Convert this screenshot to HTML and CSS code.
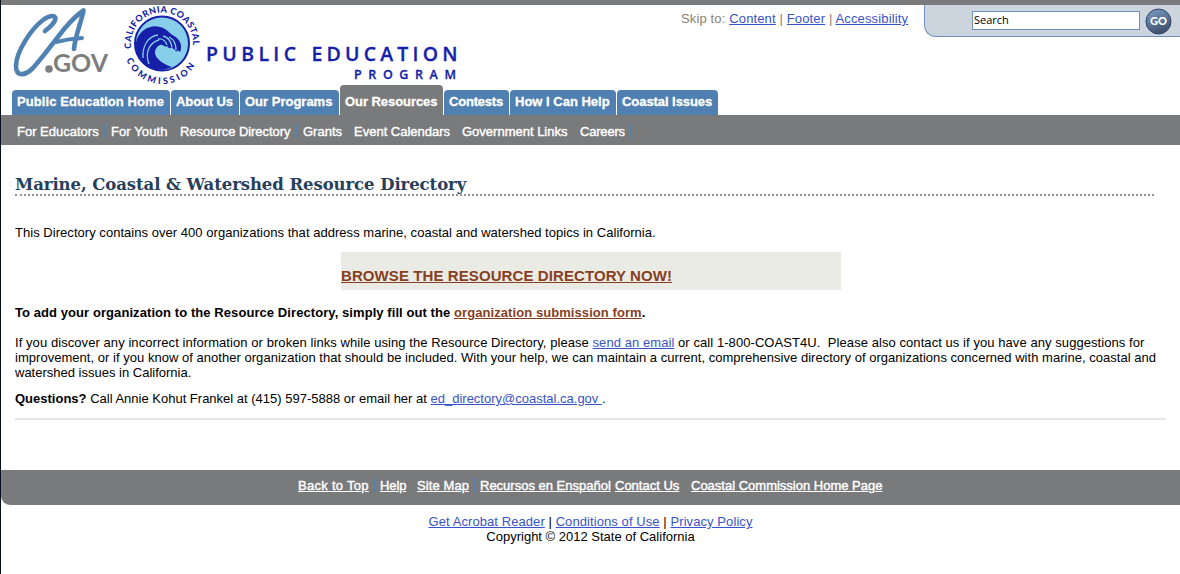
FILE: index.html
```html
<!DOCTYPE html>
<html lang="en">
<head>
<meta charset="utf-8">
<title>Marine, Coastal &amp; Watershed Resource Directory</title>
<link rel="stylesheet" href="styles.css">
</head>
<body>
<div class="page">
  <header class="header">
    <svg class="logo" width="470" height="80" viewBox="0 5 470 80">
      <g fill="none" stroke="#4f82b3" stroke-linecap="round" stroke-linejoin="round">
        <path stroke-width="4.600" d="M45 31C49 28 55 23 55.500 18.500C55.500 15 50 15 43 20C31 29 16 52 16 66C16 77 25 76 33 68C44 56 56 39 65 28C71 21 77 15 83.500 10.500C82 20 75 36 74 49"/>
        <path stroke-width="4" d="M56 42C64 40 73 38.500 82 38"/>
      </g>
      <circle cx="49" cy="69" r="3.800" fill="#7d7e80"/>
      <text class="gov" x="53" y="71.800" textLength="55" lengthAdjust="spacingAndGlyphs">GOV</text>
      <circle cx="162" cy="43.500" r="27" fill="#87ceeb" stroke="#161fa8" stroke-width="2"/>
      <path fill="#161fa8" d="M136 43C138 31 150 24 160 27C166 28 169 33 174 36C180 39 183 46 180 52C178 51 178 49 176 52C175 48 173 50 172 47C170 50 168 47 167 46C165 48 163 44 160 45C152 49 152 60 172 67C153 76 134 62 136 43Z"/>
      <g fill="none" stroke="#87ceeb" stroke-width="1.300">
        <path d="M143 58C142 45 149 36 158 35M149 64C144 51 151 42 159 40"/>
        <path d="M163 36C168 37 171 42 172 47M169 37C173 39 176 44 176 50M158 39C163 38 166 42 167 45"/>
      </g>
      <path id="arc-top" fill="none" d="M131.500 48.500A31 31 0 1 1 192.600 49"/>
      <path id="arc-bottom" fill="none" d="M126.500 59.500A38 38 0 0 0 199 55"/>
      <text class="ring"><textPath href="#arc-top" textLength="104">CALIFORNIA COASTAL</textPath></text>
      <text class="ring"><textPath href="#arc-bottom" textLength="85">COMMISSION</textPath></text>
      <text class="wordmark" x="206" y="61" textLength="90">PUBLIC</text>
      <text class="wordmark" x="311.500" y="61" textLength="146">EDUCATION</text>
      <text class="wordmark small" x="354" y="79" textLength="102">PROGRAM</text>
    </svg>
    <div class="skip">Skip to: <a href="#">Content</a> | <a href="#">Footer</a> | <a href="#">Accessibility</a></div>
    <form class="search">
      <input class="search-field" type="text" value="Search" aria-label="Search">
      <svg class="go" width="27" height="27" viewBox="0 0 27 27">
        <defs><linearGradient id="shade" x1="0" y1="0" x2="0.400" y2="1"><stop offset="0" stop-color="#7fa0c8"/><stop offset="1" stop-color="#41536e"/></linearGradient></defs>
        <circle cx="13.500" cy="13.500" r="12.500" fill="url(#shade)" stroke="#2f4568"/>
        <text class="go-label" x="5" y="17.300" textLength="17" lengthAdjust="spacingAndGlyphs">GO</text>
      </svg>
    </form>
  </header>
  <nav class="tabs">
    <a class="tab t1" href="#">Public Education Home</a>
    <a class="tab t2" href="#">About Us</a>
    <a class="tab t3" href="#">Our Programs</a>
    <a class="tab t4 active" href="#">Our Resources</a>
    <a class="tab t5" href="#">Contests</a>
    <a class="tab t6" href="#">How I Can Help</a>
    <a class="tab t7" href="#">Coastal Issues</a>
  </nav>
  <nav class="subnav">
    <a class="s1" href="#">For Educators</a>
    <a class="s2" href="#">For Youth</a>
    <a class="s3" href="#">Resource Directory</a>
    <a class="s4" href="#">Grants</a>
    <a class="s5" href="#">Event Calendars</a>
    <a class="s6" href="#">Government Links</a>
    <a class="s7" href="#">Careers</a>
  </nav>
  <main class="content">
    <h1 class="title">Marine, Coastal &amp; Watershed Resource Directory</h1>
    <p class="intro">This Directory contains over 400 organizations that address marine, coastal and watershed topics in California.</p>
    <div class="browse"><a href="#">BROWSE THE RESOURCE DIRECTORY NOW!</a></div>
    <p class="add"><b>To add your organization to the Resource Directory, simply fill out the <a href="#">organization submission form</a>.</b></p>
    <p class="contact"><span class="wide">If you discover any incorrect information or broken links while using the Resource Directory, please <a href="#">send an email</a> or call 1-800-COAST4U.&nbsp; Please also contact us if you have any suggestions for</span><br><span class="mid">improvement, or if you know of another organization that should be included. With your help, we can maintain a current, comprehensive directory of organizations concerned with marine, coastal and</span><br>watershed issues in California.</p>
    <p class="questions"><b>Questions?</b> Call Annie Kohut Frankel at (415) 597-5888 or email her at <a href="#">ed_directory@coastal.ca.gov&nbsp;</a>.</p>
  </main>
  <footer>
    <div class="footbar">
      <a class="f1" href="#">Back to Top</a>
      <a class="f2" href="#">Help</a>
      <a class="f3" href="#">Site Map</a>
      <a class="f4" href="#">Recursos en Enspañol</a>
      <a class="f5" href="#">Contact Us</a>
      <a class="f6" href="#">Coastal Commission Home Page</a>
    </div>
    <div class="legal"><span class="legal-links"><a href="#">Get Acrobat Reader</a> | <a href="#">Conditions of Use</a> | <a href="#">Privacy Policy</a></span><br>Copyright © 2012 State of California</div>
  </footer>
</div>
</body>
</html>
```

FILE: styles.css
```css
* { box-sizing: border-box; }
body { margin: 0; background: #fff; color: #000; font: 13px/15px "Liberation Sans", Arial, sans-serif; }
a { color: #3953c8; }
.page { height: 574px; border-left: 1px solid #05101c; overflow: hidden; }

.header { display: flex; height: 85px; border-top: 5px solid #797a7c; }
.logo { flex: none; width: 470px; margin-left: -1px; overflow: visible; }
.gov { font: bold 25.500px Lato, sans-serif; fill: #7d7e80; }
.ring { font: 900 9px Lato, sans-serif; fill: #161fa8; }
.wordmark { font: 600 19.500px "Open Sans", sans-serif; fill: #161fa8; stroke: #161fa8; stroke-width: .3px; }
.small { font-size: 12.500px; }
.skip { margin: 6px 0 0 211px; width: 243px; color: #8b8178; white-space: nowrap; letter-spacing: .14px; }
.search { display: flex; align-items: flex-start; width: 256px; height: 32px; padding: 5px 0 0 47px; background: #ccd4de; border: solid #6d91bb; border-width: 0 0 1px 1px; border-bottom-left-radius: 12px; }
.search-field { width: 168px; height: 19px; margin: 1px 5px 0 0; padding: 0 1px 2px; border: 1px solid #6d91bb; border-radius: 0; font: 11px "Open Sans", sans-serif; color: #000; background: #fff; }
.go { flex: none; margin-top: -2px; }
.go-label { font: 900 11.500px Lato, sans-serif; fill: #fff; }

.tabs { display: flex; align-items: flex-end; gap: 1px; height: 30px; padding-left: 11px; }
.tab { height: 25px; padding: 4px 0 0 5px; border-radius: 4px 4px 0 0; background: #4f80b1; color: #fff; font-weight: bold; -webkit-text-stroke: .3px #fff; text-decoration: none; white-space: nowrap; }
.active { height: 30px; padding-top: 9px; background: #797a7c; }
.t1 { width: 158px; letter-spacing: .09px; }
.t2 { width: 68px; letter-spacing: -.1px; }
.t3 { width: 99px; }
.t4 { width: 103px; letter-spacing: -.06px; }
.t5 { width: 65px; letter-spacing: -.2px; }
.t6 { width: 106px; }
.t7 { width: 101px; letter-spacing: -.06px; }

.subnav { display: flex; height: 30px; padding: 9px 0 0 10px; background: #797a7c; }
.subnav a { height: 14px; padding-left: 6px; border-right: 1px solid #5580ac; color: #fff; line-height: 15px; text-decoration: none; white-space: nowrap; -webkit-text-stroke: .4px #fff; }
.s1 { width: 94px; }
.s2 { width: 69px; letter-spacing: .1px; }
.s3 { width: 123px; letter-spacing: -.04px; }
.s4 { width: 51px; }
.s5 { width: 108px; }
.s6 { width: 118px; }
.s7 { width: 57px; letter-spacing: -.2px; }

.content { height: 275px; width: 1165px; padding: 28px 0 0 14px; }
.title { width: 1139px; height: 23px; margin: 0; border-bottom: 2px dotted #929292; font: bold 16.500px/23px "DejaVu Serif", Georgia, serif; color: #283f5b; white-space: nowrap; letter-spacing: -.08px; }
.content p { margin: 0; white-space: nowrap; }
.intro { padding-top: 29px; letter-spacing: .037px; }
.browse { width: 500px; height: 38px; margin: 12px 0 0 326px; padding-top: 15px; background: #eaebe4; font: bold 15px/18px "Liberation Sans", sans-serif; letter-spacing: .09px; }
.browse a, .add a { color: #87401f; }
.content .add { margin-top: 15px; letter-spacing: .075px; }
.content .contact { margin-top: 15px; }
.wide { letter-spacing: .069px; }
.mid { letter-spacing: .03px; }
.content .questions { margin-top: 11px; padding-bottom: 12px; border-bottom: 2px solid #e5e5e5; }

footer { padding-top: 50px; }
.footbar { display: flex; height: 35px; padding: 8px 0 0 297px; background: #797a7c; border-bottom-left-radius: 9px; }
.footbar a { color: #fff; white-space: nowrap; -webkit-text-stroke: .4px #fff; }
.f1 { width: 82px; letter-spacing: .28px; }
.f2 { width: 37px; letter-spacing: -.1px; }
.f3 { width: 63px; letter-spacing: .1px; }
.f4 { width: 135px; }
.f5 { width: 76px; }
.f1, .f2, .f3, .f5 { height: 14px; background: linear-gradient(#5580ac, #5580ac) right 5px top 0/1px 100% no-repeat; }
.legal { padding-top: 9px; text-align: center; }
.legal-links { letter-spacing: .08px; }
```
